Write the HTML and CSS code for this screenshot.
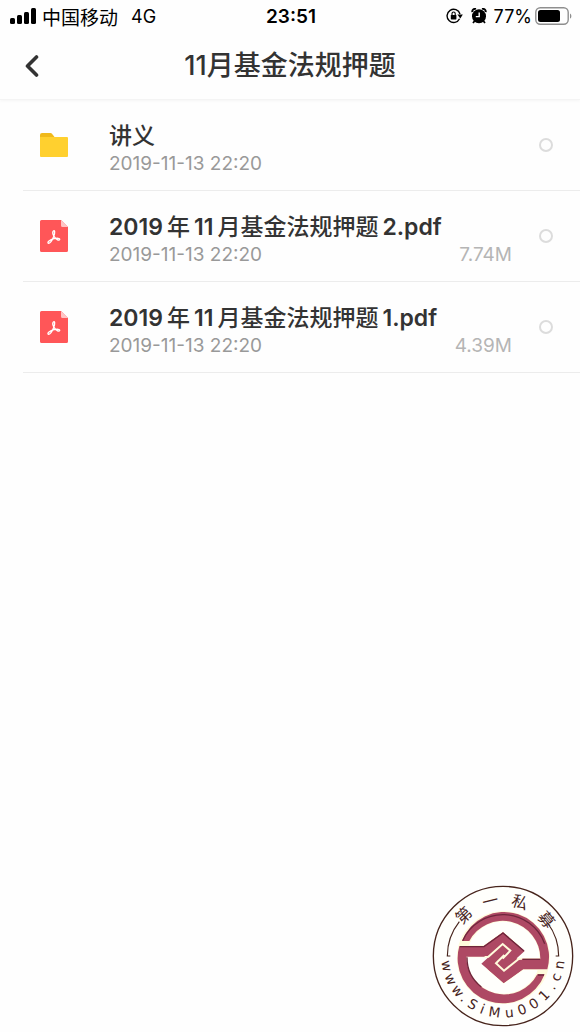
FILE: index.html
```html
<!DOCTYPE html>
<html lang="zh-CN">
  <head>
    <meta charset="UTF-8" />
    <meta name="viewport" content="width=device-width, initial-scale=1.0" />
    <title>11月基金法规押题</title>
    <link rel="stylesheet" href="styles.css">
  </head>
  <body>
    <header class="top">
      <div class="status">
        <div class="status-left">
          <svg class="signal" width="26" height="16" viewBox="0 0 26 16" aria-hidden="true">
            <rect x="0" y="10" width="5" height="6" rx="1.5" />
            <rect x="7" y="7" width="5" height="9" rx="1.5" />
            <rect x="14" y="4" width="5" height="12" rx="1.5" />
            <rect x="21" y="0" width="5" height="16" rx="1.5" />
          </svg>
          <span class="carrier">中国移动</span>
          <span class="network">4G</span>
        </div>
        <div class="clock">23:51</div>
        <div class="status-right">
          <svg width="17" height="16" viewBox="0 0 17 16" aria-hidden="true">
            <path d="M13.6 10.8A6.600 6.600 0 1 1 14 6" fill="none" stroke="#000" stroke-width="1.4" />
            <path d="M11.400 6.600h5.400l-2.500 4z" />
            <rect x="4.8" y="7" width="5.6" height="4.4" rx="0.6" />
            <path d="M6 7V5.600a1.600 1.600 0 0 1 3.200 0V7" fill="none" stroke="#000" stroke-width="1.1" />
          </svg>
          <svg class="alarm" width="16" height="16" viewBox="0 0 16 16" aria-hidden="true">
            <circle cx="8" cy="8.3" r="7" />
            <path d="M1.200 4.200A3 3 0 0 1 5 .9M14.800 4.200A3 3 0 0 0 11 .9M3.600 13l-1.600 2M12.400 13l1.600 2" fill="none" stroke="#000" stroke-width="1.8" />
            <path d="M8.200 4.400v4.200H4.800" fill="none" stroke="#fff" stroke-width="1.4" />
          </svg>
          <span>77%</span>
          <svg class="battery" width="37" height="18" viewBox="0 0 37 18" aria-hidden="true">
            <rect x="0.8" y="0.8" width="32.4" height="16.4" rx="4.5" fill="none" stroke="#8e8e8e" stroke-width="1.4" />
            <rect x="3" y="3" width="22" height="12" rx="2.5" />
            <path d="M35 6.400c1.800.8 1.800 4.400 0 5.200z" fill="#8e8e8e" />
          </svg>
        </div>
      </div>
      <div class="nav">
        <button class="back" type="button" aria-label="返回">
          <svg width="14" height="22" viewBox="0 0 14 22" aria-hidden="true">
            <path d="M11.500 2L2.500 11l9 9" fill="none" stroke="#333" stroke-width="3.600" stroke-linecap="round" stroke-linejoin="round" />
          </svg>
        </button>
        <h1 class="title">11月基金法规押题</h1>
      </div>
    </header>

    <ul class="files">
      <li class="file">
        <svg class="icon" width="28" height="24" viewBox="0 0 28 24" aria-hidden="true">
          <path d="M0 2a2 2 0 0 1 2-2h8.500a2 2 0 0 1 1.500.7L14.500 4v4H0z" fill="#f0b91a" />
          <path d="M0 4h27a1 1 0 0 1 1 1v18a1 1 0 0 1-1 1H1a1 1 0 0 1-1-1z" fill="#ffd02f" />
        </svg>
        <div class="info">
          <label class="name" for="file-1">讲义</label>
          <div class="meta"><span>2019-11-13 22:20</span></div>
        </div>
        <input class="pick" type="checkbox" id="file-1">
      </li>
      <li class="file">
        <svg class="icon" width="28" height="32" viewBox="0 0 28 32" aria-hidden="true">
          <path d="M1.500 0H21l7 7v23.500a1.500 1.500 0 0 1-1.500 1.500h-25A1.500 1.500 0 0 1 0 30.500v-29A1.500 1.500 0 0 1 1.500 0z" fill="#ff5658" />
          <path d="M21 0l7 7h-5.500A1.500 1.500 0 0 1 21 5.500z" fill="#ffc4c4" />
          <path d="M13 11.500c2-2.500 2.200 1 .7 5-1.500 3.800-3.500 6.800-5.200 6.800-2-.8 1.500-3.600 5.500-4.600 3-.7 6.200-.7 5.700.9-.7 1.600-4-.5-5.500-3-1.400-2.300-1.800-4-1.200-5.100z" fill="none" stroke="#fff" stroke-width="1.300" stroke-linejoin="round" />
        </svg>
        <div class="info">
          <label class="name" for="file-2"><b>2019</b>年<b>11</b>月基金法规押题<b>2.pdf</b></label>
          <div class="meta"><span>2019-11-13 22:20</span><span class="size">7.74M</span></div>
        </div>
        <input class="pick" type="checkbox" id="file-2">
      </li>
      <li class="file">
        <svg class="icon" width="28" height="32" viewBox="0 0 28 32" aria-hidden="true">
          <path d="M1.500 0H21l7 7v23.500a1.500 1.500 0 0 1-1.500 1.500h-25A1.500 1.500 0 0 1 0 30.500v-29A1.500 1.500 0 0 1 1.500 0z" fill="#ff5658" />
          <path d="M21 0l7 7h-5.500A1.500 1.500 0 0 1 21 5.500z" fill="#ffc4c4" />
          <path d="M13 11.500c2-2.500 2.200 1 .7 5-1.500 3.800-3.500 6.800-5.200 6.800-2-.8 1.500-3.600 5.500-4.600 3-.7 6.200-.7 5.700.9-.7 1.600-4-.5-5.500-3-1.400-2.300-1.800-4-1.200-5.100z" fill="none" stroke="#fff" stroke-width="1.300" stroke-linejoin="round" />
        </svg>
        <div class="info">
          <label class="name" for="file-3"><b>2019</b>年<b>11</b>月基金法规押题<b>1.pdf</b></label>
          <div class="meta"><span>2019-11-13 22:20</span><span class="size">4.39M</span></div>
        </div>
        <input class="pick" type="checkbox" id="file-3">
      </li>
    </ul>

    <!-- round seal over the page corner -->
    <svg class="seal" width="142" height="142" viewBox="37 45 426 426">
      <defs>
        <path id="arc-top" d="M98 258a152 152 0 0 1 304 0" />
        <path id="arc-bottom" d="M65 258a185 185 0 0 0 370 0" />
      </defs>
      <circle cx="250" cy="258" r="209" fill="#fffffc" stroke="#47241c" stroke-width="4" />
      <path d="M92 258H83A167 167 0 0 1 119 155M408 258h9A167 167 0 0 0 384 159" fill="none" stroke="#47241c" stroke-width="3.500" />
      <g transform="translate(105 111)">
        <!-- pale glow, then the two interlocking halves -->
        <circle cx="146" cy="152" r="124" fill="none" stroke="#fffbdc" stroke-width="30" />
        <circle cx="146" cy="152" r="109" fill="#fffffc" />
        <path d="M22 102A135 135 0 0 1 278 187H205L147 228 100 187 190 155H257A113 113 0 0 0 44 102ZM270 202A135 135 0 0 1 14 117H87L145 76 192 117 102 149H35A113 113 0 0 0 248 202Z" fill="#ae4964" stroke="#fffbdc" stroke-width="4" paint-order="stroke" />
        <path d="M87 117L145 76 210 132 186 154 205 187 147 228 80 170 103 149Z" fill="#ae4964" />
        <path d="M24 101A133 133 0 0 1 270 110M16 119H88L145 78 208 132M204 157H256M250 204H268M37 151A111 111 0 0 0 80 240" fill="none" stroke="#6e263b" stroke-width="4" />
        <path d="M90 150L101 149 144 111 167 131 144 155M202 155L192 156 148 191 124 169 149 144" fill="none" stroke="#fffbdc" stroke-width="6" />
      </g>
      <text class="seal-cn" dx="98 34 33 38"><textPath href="#arc-top">第一私募</textPath></text>
      <text class="seal-url" dx="16 11 11 11 15 17 17 17 17 17 17 17 17 17"><textPath href="#arc-bottom">www.SiMu001.cn</textPath></text>
    </svg>
  </body>
</html>
```
FILE: styles.css
```css
* {
  box-sizing: border-box;
}
body {
  margin: 0;
  min-height: 100vh;
  position: relative;
  font-family: Inter, "Noto Sans CJK SC", sans-serif;
  color: #333;
  background: #fefefe;
}
.top {
  border-bottom: 1px solid #f4f4f4;
  box-shadow: 0 1px 3px rgba(0, 0, 0, 0.04);
}
.status {
  display: grid;
  grid-template-columns: 1fr auto 1fr;
  align-items: center;
  height: 32px;
  padding: 0 8px 0 10px;
  font-size: 18px;
  color: #000;
}
.status-left,
.status-right {
  display: flex;
  align-items: center;
}
.status-left {
  gap: 6px;
}
.status-right {
  justify-content: flex-end;
}
.carrier {
  font-size: 19px;
}
.network {
  margin-left: 7px;
}
.alarm {
  margin: 0 7px 0 8px;
}
.battery {
  margin-left: 3px;
}
.clock {
  font-size: 19px;
  font-weight: 600;
}
.nav {
  display: grid;
  grid-template-columns: 64px 1fr 64px;
  align-items: center;
  height: 67px;
}
.back {
  display: flex;
  justify-content: center;
  padding: 10px;
  border: none;
  background: none;
  cursor: pointer;
}
.title {
  margin: 0;
  font-size: 27px;
  font-weight: 500;
  line-height: 40px;
  text-align: center;
}
.files {
  list-style: none;
  margin: 0;
  padding: 0 0 0 23px;
}
.file {
  display: flex;
  align-items: center;
  padding: 14px 27px 14px 17px;
  border-bottom: 1px solid #ececec;
}
.icon {
  flex: none;
}
.info {
  flex: 1;
  margin: 0 27px 0 41px;
  padding-top: 6px;
}
.name {
  display: block;
  font-size: 23px;
  font-weight: 500;
  line-height: 32px;
}
.name b {
  font-weight: 600;
  margin: 0 4px;
}
.name b:first-child {
  margin-left: 0;
}
.meta {
  display: flex;
  justify-content: space-between;
  font-size: 19px;
  line-height: 24px;
  color: #999;
}
.size {
  color: #b5b5b5;
}
.pick {
  appearance: none;
  width: 14px;
  height: 14px;
  margin: 0;
  border: 2px solid #dcdcdc;
  border-radius: 50%;
}
.pick:checked {
  background: #ff5658;
}
.seal {
  position: absolute;
  right: 6px;
  bottom: 5px;
}
.seal-cn {
  font-family: "Noto Sans CJK SC", sans-serif;
  font-size: 48px;
  fill: #47241c;
}
.seal-url {
  font-family: "DejaVu Sans", sans-serif;
  font-size: 41px;
  fill: #47241c;
}
```
